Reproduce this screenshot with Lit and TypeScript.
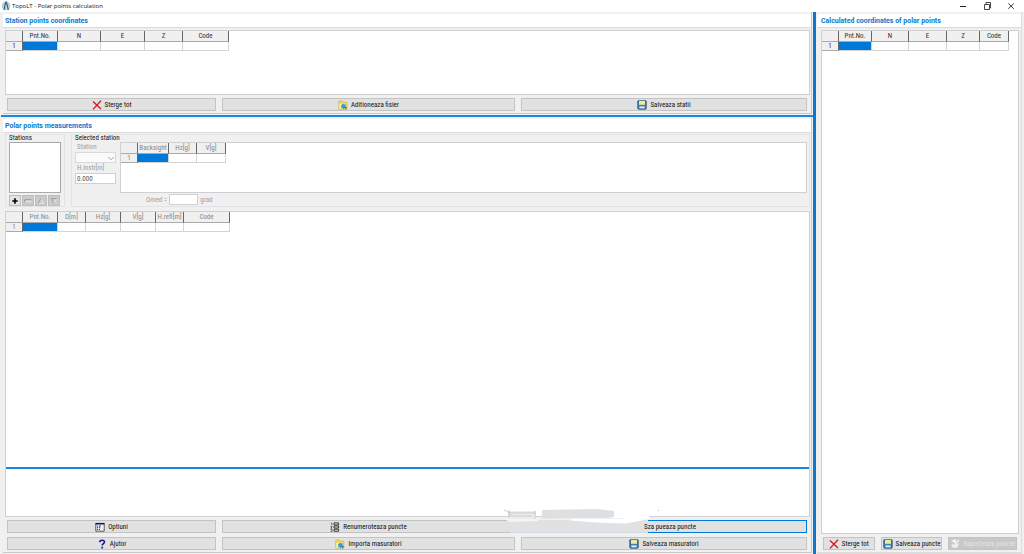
import { LitElement, html, css, svg, nothing } from "lit";
import { customElement, property } from "lit/decorators.js";

const icons: Record<string, unknown> = {
  cross: svg`<path d="M1 1.5 L9 9 M9 .8 L1 9.4" stroke="#d8141c" stroke-width="1.3" fill="none"/>`,
  folder: svg`<path d="M.8 1h3.4l1 1.2h3.6v7H.8z" fill="#f4dc62" stroke="#c9a83a" stroke-width=".6"/><path d="M1.2 4h4v4.8h-4z" fill="#fbf2a8"/><path d="M3 5.4l2-2 .8 1.2 2.3-.2-1 1.8 1.7 1.4-2.3.3-.5 1.8-1.6-1.6-1.8.3.9-1.5z" fill="#2d9ed8"/><path d="M6.6 6.6l2.4 1-1.2 2z" fill="#1b6fb4"/>`,
  disk: svg`<path d="M.8 1.2Q.8.8 1.2.8h7.6q.4 0 .4.4v7q0 1-1 1H2Q.8 9.200.8 8.200z" fill="#3f82b4" stroke="#1d4766" stroke-width=".8"/><path d="M2 1h6v3.800H2z" fill="#eee9a0"/><path d="M2.400 6.400h5.200v2H2.400z" fill="#dfe9f0"/>`,
  options: svg`<path d="M.8 1.4h8.4v7.8H.8z" fill="#f4f4f4" stroke="#333" stroke-width=".8"/><path d="M.6 1h8.8v1.5H.6z" fill="#10107c"/><path d="M2 4h1.2M2 5.7h1.2M2 7.4h1.2M4 4h2M4 5.7h1.2M4 7.4h1" stroke="#222" stroke-width=".9"/>`,
  help: svg`<path d="M2.8 3.3C2.8.6 7.6.6 7.4 3.2 7.3 4.8 5.2 4.7 5.2 6.6" stroke="#17178c" stroke-width="1.6" fill="none"/><path d="M4.3 7.8h1.8v1.6H4.3z" fill="#17178c"/>`,
  renumber: svg`<path d="M.9 1.2h1v2M.6 4.4h1.5L.8 6.3h1.4M.6 7.6h1.5v2H.6" stroke="#333" stroke-width=".7" fill="none"/><path d="M4 .9h4.6v2H4zM4 4h4.6v2H4zM4 7.2h4.6v2H4z" fill="#eee" stroke="#222" stroke-width=".9"/>`,
  report: svg`<path d="M1 5.4l2 3.6 4.6-.6L9 4 6.6 5z" fill="#eee"/><path d="M2.4 2l3-1.2L5 3.4zM5 5l4-4" stroke="#f6f6f6" stroke-width="1.1" fill="#e4e4e4"/>`,
  plus: svg`<path d="M5 1.6v6.8M1.6 5h6.8" stroke="#000" stroke-width="2"/>`,
  minus: svg`<path d="M1 3.500h8M1 3.500v3" stroke="#888" stroke-width="1" fill="none"/><path d="M2 4.500h7v2H2z" fill="#e4e4e4"/>`,
  up: svg`<path d="M5 1.6L8.4 8H1.6z" fill="#d0d0d0" stroke="#eee" stroke-width=".8"/><path d="M5 1.600L1.600 8" stroke="#888"/>`,
  down: svg`<path d="M5 8.4L8.4 2H1.6z" fill="#d0d0d0" stroke="#eee" stroke-width=".8"/><path d="M8.400 2H1.600L5 8.400" stroke="#888" fill="none"/>`,
  chevron: svg`<path d="M2 4l3 2.6L8 4" fill="none" stroke="#aaa" stroke-width="1"/>`,
  min: svg`<path d="M2 5.5h6" stroke="#222" fill="none"/>`,
  max: svg`<path d="M2.5 3.5h5v5h-5zM4 3V1.5h4.5V7H8" stroke="#333" stroke-width=".9" fill="none"/>`,
  close: svg`<path d="M2.4 2.4l5.4 5.4M7.8 2.4L2.4 7.8" stroke="#222" stroke-width=".9" fill="none"/>`,
  logo: svg`<circle cx="5" cy="5" r="4.4" fill="#b5cfdc"/><path d="M4.600 1L3 9M5.400 1L7.4 9" stroke="#2b566f" stroke-width="1" fill="none"/><path d="M4.2.4h1.600v3.400H4.200z" fill="#2d6f96"/>`,
};

const icon = (name: string) =>
  html`<svg class="icon" viewBox="0 0 10 10" aria-hidden="true">${icons[name]}</svg>`;

const shared = css`
  * { box-sizing: border-box; }
  .icon { width: 10px; height: 10px; flex: none; display: block; }
  button, input, select { font: inherit; color: inherit; margin: 0; padding: 0; border-radius: 0; }
`;

@customElement("data-grid")
class DataGrid extends LitElement {
  @property({ attribute: false }) columns: [string, number][] = [];
  @property({ type: Number }) lead = 17;
  @property({ type: Boolean }) muted = false;

  static styles = [shared, css`
    :host { display: block; color: #333; }
    :host([muted]) { color: #888; }
    table { border-collapse: separate; border-spacing: 0; table-layout: fixed; width: 0; }
    th, td { height: 11px; padding: 0; text-align: center; font-weight: 400; line-height: 8px; white-space: nowrap; }
    th { background: #f0f0f0; border-right: 1px solid #666; border-bottom: 1px solid #aaa; }
    tbody th, td { height: 9px; }
    td { background: #fff; border-right: 1px solid #d4d4d4; border-bottom: 1px solid #d4d4d4; }
    .current { background: #0078d7; }
  `];

  render() {
    return html`<table>
      <colgroup><col style="width:${this.lead}px">${this.columns.map(([, w]) => html`<col style="width:${w}px">`)}</colgroup>
      <thead><tr><th></th>${this.columns.map(([name]) => html`<th scope="col">${name}</th>`)}</tr></thead>
      <tbody><tr><th scope="row">1</th>${this.columns.map((_, i) => html`<td class=${i === 0 ? "current" : ""}></td>`)}</tr></tbody>
    </table>`;
  }
}

@customElement("tool-button")
class ToolButton extends LitElement {
  @property() icon = "";
  @property() label = "";
  @property({ type: Boolean }) disabled = false;
  @property({ type: Boolean }) primary = false;

  static styles = [shared, css`
    :host { display: block; min-width: 0; }
    button {
      width: 100%; height: 13px; display: flex; align-items: center; justify-content: center; gap: 3px;
      background: #e1e1e1; border: 1px solid #c3c3c3; color: #111; line-height: 8px; white-space: nowrap;
    }
    :host([primary]) button { border: 1px solid #0078d7; padding-left: 12px; }
    button:disabled { background: #c8c8c8; border-color: #c3c3c3; color: #e4e4e4; }
  `];

  render() {
    return html`<button ?disabled=${this.disabled}>${this.icon ? icon(this.icon) : nothing}<span>${this.label}</span></button>`;
  }
}

@customElement("app-root")
class AppRoot extends LitElement {
  static styles = [shared, css`
    :host {
      display: flex; flex-direction: column; min-height: 100vh; background: #f0f0f0; color: #222;
      font: 7px/8px "Liberation Sans Narrow", "Roboto Condensed", Roboto, sans-serif;
    }
    .titlebar { display: flex; align-items: center; height: 12px; background: #fff; padding: 0 8px 0 1px; color: #111; }
    .titlebar h1 { flex: 1; margin: 0 0 0 1px; font: 400 6px/8px "Open Sans", sans-serif; }
    .controls { display: flex; gap: 14px; }
    .controls button { border: 0; background: none; width: 10px; height: 10px; }
    .body { flex: 1; display: flex; }
    .left { flex: 1; min-width: 0; display: flex; flex-direction: column; padding-left: 3px; }
    .right { width: 205px; margin-right: 2px; display: flex; flex-direction: column; border-right: 1px solid #ddd; border-bottom: 2px solid #dcdcdc; }
    .vsplit { width: 3px; background: #0f76cc; margin: 0 1px; }
    .hsplit { height: 2px; background: #1a86dc; flex: none; }
    .outer { margin: 1px -1px 0 -2px; }
    .pane { display: flex; flex-direction: column; border-right: 1px solid #c8c8c8; border-bottom: 1px solid #c8c8c8; }
    .grow { flex: 1; margin-bottom: 1px; }
    h2 {
      margin: 2px 0 0; padding: 1px 2px 0; height: 14px; background: #fff; border-bottom: 1px solid #dcdcdc;
      font: 700 7px/13px Roboto, sans-serif; color: #0878d0;
    }
    .right h2 { padding-left: 4px; }
    .sheet { background: #fff; border: 1px solid #cfcfd4; }
    .stationsheet { margin: 2px 1px 0 2px; height: 65px; }
    .tri { display: grid; grid-template-columns: 209fr 293fr 286fr; gap: 4px 6px; padding: 3px 4px 2px 4px; }
    .setup { display: flex; gap: 6px; padding: 1px 1px 4px 2px; }
    fieldset { position: relative; margin: 0; border: 1px solid #e3e3e3; padding: 6px 2px 2px 3px; min-width: 0; height: 73px; }
    legend { float: left; width: 100%; margin: -7px 0 0; padding: 0; line-height: 8px; color: #111; }
    .stations { width: 60px; }
    .selected { flex: 1; }
    .list { clear: both; width: 52px; height: 51px; border: 1px solid #aaa; background: #fff; }
    .mini { display: flex; gap: 1px; margin-top: 2px; }
    .mini button { width: 12px; height: 11px; border: 1px solid #bdbdbd; background: #cacaca; display: grid; place-items: center; }
    .mini button:first-child { background: #e4e4e4; }
    .mini .icon { width: 8px; height: 8px; }
    .fields { clear: both; display: grid; grid-template-columns: 41px 1fr; gap: 0 4px; color: #a0a0a0; }
    .inputs { display: flex; flex-direction: column; padding-top: 1px; }
    .inputs label { line-height: 9px; padding-left: 2px; }
    .combo { display: grid; margin-bottom: 1px; }
    .combo > * { grid-area: 1 / 1; }
    .combo .icon { justify-self: end; align-self: center; pointer-events: none; z-index: 1; }
    select, input { appearance: none; width: 100%; height: 11px; border: 1px solid #d0d0d0; background: #fff; padding: 0 1px; outline: 0; }
    .inputs input { color: #555; }
    .backsights { height: 51px; }
    .mean { grid-column: 2; display: flex; align-items: center; gap: 2px; margin-top: 1px; padding-left: 26px; }
    .mean input { width: 29px; }
    .measures { margin: 0 1px 0 2px; flex: 1; display: flex; flex-direction: column; }
    .rows { flex: 1; }
    .log { height: 47px; }
    .actions { position: relative; }
    .smudge { position: absolute; left: 61.5%; top: -12px; width: 170px; height: 29px; pointer-events: none; }
    .results { margin: 2px 2px 0 4px; flex: 1; }
    .bar { display: flex; gap: 6px; padding: 3px 4px 2px 6px; }
    .bar > :nth-child(1) { flex: 52; }
    .bar > :nth-child(2) { flex: 62; }
    .bar > :nth-child(3) { flex: 69; }
  `];

  render() {
    return html`
      <header class="titlebar">
        ${icon("logo")}
        <h1>TopoLT - Polar points calculation</h1>
        <div class="controls">
          <button aria-label="Minimize">${icon("min")}</button>
          <button aria-label="Restore">${icon("max")}</button>
          <button aria-label="Close">${icon("close")}</button>
        </div>
      </header>
      <main class="body">
        <div class="left">
          <section class="pane">
            <h2>Station points coordinates</h2>
            <div class="sheet stationsheet">
              <data-grid .columns=${[["Pnt.No.", 35], ["N", 43], ["E", 44], ["Z", 38], ["Code", 46]]}></data-grid>
            </div>
            <div class="tri">
              <tool-button icon="cross" label="Sterge tot"></tool-button>
              <tool-button icon="folder" label="Aditioneaza fisier"></tool-button>
              <tool-button icon="disk" label="Salveaza statii"></tool-button>
            </div>
          </section>
          <div class="hsplit outer"></div>
          <section class="pane grow">
            <h2>Polar points measurements</h2>
            <div class="setup">
              <fieldset class="stations">
                <legend>Stations</legend>
                <div class="list" role="listbox" aria-label="Stations"></div>
                <div class="mini">
                  <button aria-label="Add station">${icon("plus")}</button>
                  <button aria-label="Remove station" disabled>${icon("minus")}</button>
                  <button aria-label="Move up" disabled>${icon("up")}</button>
                  <button aria-label="Move down" disabled>${icon("down")}</button>
                </div>
              </fieldset>
              <fieldset class="selected">
                <legend>Selected station</legend>
                <div class="fields">
                  <div class="inputs">
                    <label for="station">Station</label>
                    <div class="combo"><select id="station" disabled></select>${icon("chevron")}</div>
                    <label for="height">H.instr[m]</label>
                    <input id="height" value="0.000" disabled>
                  </div>
                  <div class="sheet backsights">
                    <data-grid muted .columns=${[["Backsight", 31], ["Hz[g]", 28], ["V[g]", 29]]}></data-grid>
                  </div>
                  <div class="mean">
                    <label for="mean">Omed =</label><input id="mean" disabled><span>grad</span>
                  </div>
                </div>
              </fieldset>
            </div>
            <div class="sheet measures">
              <div class="rows">
                <data-grid muted .columns=${[["Pnt.No.", 35], ["D[m]", 28], ["Hz[g]", 35], ["V[g]", 35], ["H.refl[m]", 28], ["Code", 46]]}></data-grid>
              </div>
              <div class="hsplit"></div>
              <div class="log"></div>
            </div>
            <div class="tri actions">
              <tool-button icon="options" label="Optiuni"></tool-button>
              <tool-button icon="renumber" label="Renumeroteaza puncte"></tool-button>
              <tool-button primary label="Sza pueaza puncte"></tool-button>
              <tool-button icon="help" label="Ajutor"></tool-button>
              <tool-button icon="folder" label="Importa masuratori"></tool-button>
              <tool-button icon="disk" label="Salveaza masuratori"></tool-button>
              <svg class="smudge" viewBox="0 0 170 29" aria-hidden="true">
                <defs>
                  <filter id="soft"><feGaussianBlur stdDeviation=".6"/></filter>
                </defs>
                <path d="M10 16h132v11H10z" fill="#e1e1e1"/>
                <path d="M10 15h138v2H10z" fill="#e1e1e1"/>
                <path d="M10 27.500h12M20 27.500h128" stroke="#cfdbe6"/>
                <g filter="url(#soft)">
                  <path d="M110 8l38 1 2 4-6 2-18 3.500-30-1-26-2 4-3 36-1z" fill="#fff"/>
                  <path d="M42 5l54-1 18 2v6l-6 1-66 .5z" fill="#dfdfdf"/>
                  <path d="M74 13.500h50" stroke="#e6f1fa"/>
                  <path d="M8 6h28v9H8z" fill="#ededed"/>
                  <path d="M4 5l6 3h25M10 8v3h22M9 5v8M35 6v9" fill="none" stroke="#c8c8c8" stroke-width="1"/>
                  <path d="M4 14h34v2l-28 1z" fill="#f4f4f4"/>
                </g>
                <path d="M158 5l1 1" stroke="#8cc4ee"/>
              </svg>
            </div>
          </section>
        </div>
        <div class="vsplit"></div>
        <section class="right">
          <h2>Calculated coordinates of polar points</h2>
          <div class="sheet results">
            <data-grid .columns=${[["Pnt.No.", 33], ["N", 37], ["E", 38], ["Z", 33], ["Code", 29]]}></data-grid>
          </div>
          <div class="bar">
            <tool-button icon="cross" label="Sterge tot"></tool-button>
            <tool-button icon="disk" label="Salveaza puncte"></tool-button>
            <tool-button icon="report" label="Raporteaza puncte" disabled></tool-button>
          </div>
        </section>
      </main>`;
  }
}
